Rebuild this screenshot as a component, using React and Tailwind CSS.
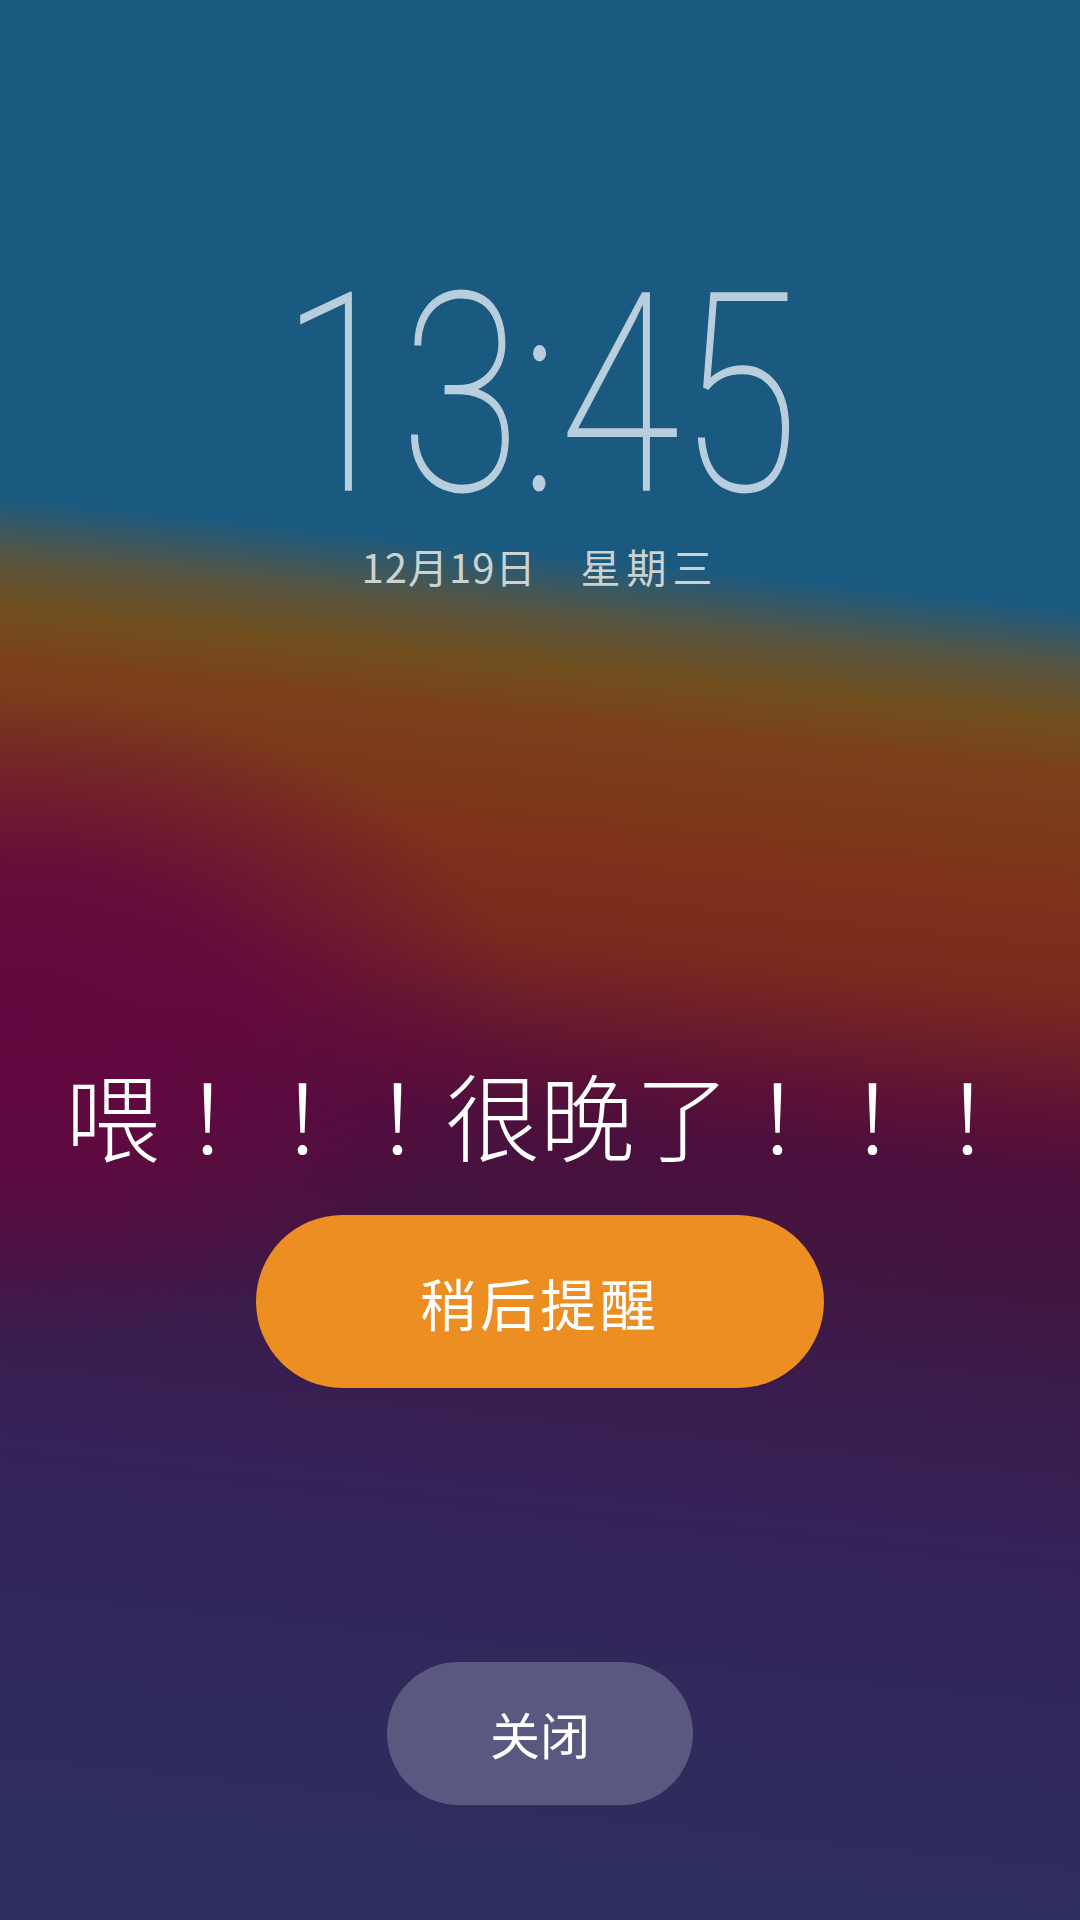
import React from "react";

const App = () => {
  return (
    <div className="w-[1080px] h-[1920px] overflow-hidden flex flex-col items-center bg-[radial-gradient(ellipse_48%_17%_at_0%_53%,rgba(98,8,64,1)_0%,rgba(98,8,64,0.85)_45%,rgba(98,8,64,0)_100%),linear-gradient(186deg,#1b5a80_0%,#1b5a80_30%,#5a5540_33%,#71501f_35.5%,#7b401b_38%,#7e331a_44%,#7b2a1e_49%,#5e1136_55%,#4c0f3d_58%,#42153f_63%,#3b1b4a_68%,#34235a_77%,#2d2f5e_96%)]">
      {/* 时间 */}
      <div className="mt-[257px] h-[277px] flex justify-center">
        <span className="inline-block scale-x-[0.79] text-[277px] leading-none font-thin text-[#b9cedc] [-webkit-text-stroke:1.5px_#b9cedc] font-['Roboto',sans-serif]">
          13:45
        </span>
      </div>

      {/* 日期 */}
      <div className="mt-[8px] flex gap-[44px] text-[40px] leading-[48px] text-[#cbd2d0] font-['Noto_Sans_CJK_SC',sans-serif]">
        <span className="tracking-[1px]">12月19日</span>
        <span className="tracking-[6px]">星期三</span>
      </div>

      {/* 提醒文字 */}
      <div className="mt-[476px] text-[95px] leading-none font-light text-white font-['Noto_Sans_CJK_TC',sans-serif] whitespace-nowrap">
        喂！！！很晚了！！！
      </div>

      {/* 稍后提醒 */}
      <button
        type="button"
        className="mt-[54px] w-[568px] h-[173px] rounded-full bg-[#ec8e22] flex items-center justify-center text-white text-[56px] font-['Noto_Sans_CJK_SC',sans-serif] tracking-[4px]"
      >
        稍后提醒
      </button>

      {/* 关闭 */}
      <button
        type="button"
        className="mt-[274px] w-[306px] h-[143px] rounded-full bg-[#5a5880] flex items-center justify-center text-white text-[50px] font-['Noto_Sans_CJK_SC',sans-serif]"
      >
        关闭
      </button>
    </div>
  );
};

export default App;
